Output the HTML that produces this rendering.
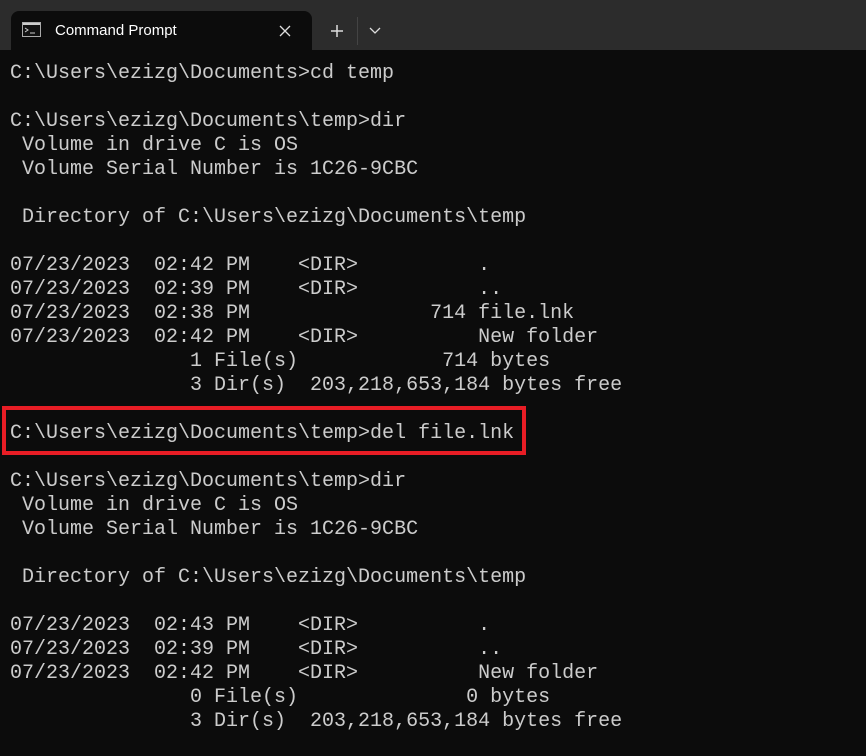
<!DOCTYPE html>
<html><head><style>
html,body{margin:0;padding:0;width:866px;height:756px;background:#0c0c0c;overflow:hidden}
.tb{position:absolute;left:0;top:0;width:866px;height:50px;background:#2c2c2c}
.tab{position:absolute;left:11px;top:11px;width:301px;height:39px;background:#0c0c0c;border-radius:8px 8px 0 0}
.tt{position:absolute;left:55px;top:22px;font:15px "Liberation Sans",sans-serif;color:#fff}
pre{position:absolute;left:10px;top:62px;margin:0;font:20px/24px "Liberation Mono",monospace;color:#cccccc}
.box{position:absolute;left:2px;top:406px;width:516px;height:41px;border:4px solid #e81d25}
</style></head><body>
<div class="tb"></div>
<div class="tab"></div>
<svg style="position:absolute;left:22px;top:22px" width="20" height="16"><rect x="0.5" y="0.5" width="18" height="14" fill="#111" stroke="#aaa"/><rect x="1" y="1" width="17" height="2" fill="#ccc"/><path d="M3 6l3 2-3 2M8 11h5" stroke="#ccc" fill="none"/></svg>
<div class="tt">Command Prompt</div>
<svg style="position:absolute;left:279px;top:25px" width="12" height="12"><path d="M1 1L11 11M11 1L1 11" stroke="#ddd" stroke-width="1.3"/></svg>
<svg style="position:absolute;left:330px;top:24px" width="14" height="14"><path d="M7 1v12M1 7h12" stroke="#ddd" stroke-width="1.5"/></svg>
<div style="position:absolute;left:357px;top:17px;width:1px;height:28px;background:#444"></div>
<svg style="position:absolute;left:369px;top:27px" width="12" height="8"><path d="M1 1l5 5 5-5" stroke="#ddd" stroke-width="1.3" fill="none"/></svg>
<div class="box"></div>
<pre>C:\Users\ezizg\Documents>cd temp

C:\Users\ezizg\Documents\temp>dir
 Volume in drive C is OS
 Volume Serial Number is 1C26-9CBC

 Directory of C:\Users\ezizg\Documents\temp

07/23/2023  02:42 PM    &lt;DIR&gt;          .
07/23/2023  02:39 PM    &lt;DIR&gt;          ..
07/23/2023  02:38 PM               714 file.lnk
07/23/2023  02:42 PM    &lt;DIR&gt;          New folder
               1 File(s)            714 bytes
               3 Dir(s)  203,218,653,184 bytes free

C:\Users\ezizg\Documents\temp>del file.lnk

C:\Users\ezizg\Documents\temp>dir
 Volume in drive C is OS
 Volume Serial Number is 1C26-9CBC

 Directory of C:\Users\ezizg\Documents\temp

07/23/2023  02:43 PM    &lt;DIR&gt;          .
07/23/2023  02:39 PM    &lt;DIR&gt;          ..
07/23/2023  02:42 PM    &lt;DIR&gt;          New folder
               0 File(s)              0 bytes
               3 Dir(s)  203,218,653,184 bytes free</pre>
</body></html>
